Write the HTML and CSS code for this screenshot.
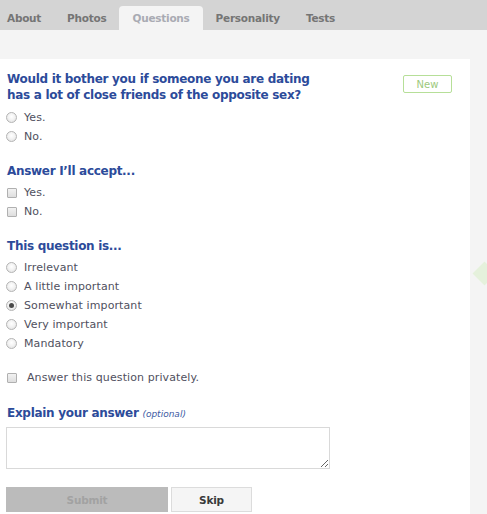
FILE: index.html
```html
<!DOCTYPE html>
<html>
<head>
<meta charset="utf-8">
<link rel="stylesheet" href="styles.css">
</head>
<body>
<nav class="tabs">
  <span class="tab first">About</span>
  <span class="tab">Photos</span>
  <span class="tab active">Questions</span>
  <span class="tab">Personality</span>
  <span class="tab">Tests</span>
</nav>
<div class="page">
  <div class="card">
    <div class="qhead">
      <h2 class="question">Would it bother you if someone you are dating<br>has a lot of close friends of the opposite sex?</h2>
      <span class="badge">New</span>
    </div>
    <div class="row"><span class="radio"></span><span class="label">Yes.</span></div>
    <div class="row"><span class="radio"></span><span class="label">No.</span></div>

    <h3 class="sub">Answer I’ll accept...</h3>
    <div class="row"><span class="check"></span><span class="label">Yes.</span></div>
    <div class="row"><span class="check"></span><span class="label">No.</span></div>

    <h3 class="sub">This question is...</h3>
    <div class="row"><span class="radio"></span><span class="label">Irrelevant</span></div>
    <div class="row"><span class="radio"></span><span class="label">A little important</span></div>
    <div class="row"><span class="radio checked"></span><span class="label">Somewhat important</span></div>
    <div class="row"><span class="radio"></span><span class="label">Very important</span></div>
    <div class="row"><span class="radio"></span><span class="label">Mandatory</span></div>

    <div class="row private"><span class="check"></span><span class="label">Answer this question privately.</span></div>

    <h3 class="sub explain">Explain your answer <em class="opt">(optional)</em></h3>
    <textarea class="answer"></textarea>

    <div class="buttons">
      <button class="btn submit">Submit</button>
      <button class="btn skip">Skip</button>
    </div>
  </div>
  <div class="gutter"><span class="diamond"></span></div>
</div>
</body>
</html>
```
FILE: styles.css
```css
html, body {
  margin: 0;
  padding: 0;
  background: #f4f4f4;
  font-family: "DejaVu Sans", Verdana, sans-serif;
}
.tabs {
  display: flex;
  align-items: flex-end;
  height: 30px;
  background: #d4d4d4;
  box-sizing: border-box;
}
.tab {
  display: flex;
  align-items: center;
  height: 24px;
  padding: 0 13px;
  font-size: 10.5px;
  letter-spacing: -0.25px;
  font-weight: bold;
  color: #757575;
  border-radius: 4px 4px 0 0;
  box-sizing: border-box;
}
.tab.first { padding-left: 7px; }
.tab.active {
  background: #f4f4f4;
  color: #a9abb3;
}
.page {
  display: flex;
  padding-top: 29px;
  min-height: 485px;
  box-sizing: border-box;
}
.card {
  width: 470px;
  flex: none;
  background: #fff;
  padding: 12px 0 2px 7px;
  box-sizing: border-box;
  display: flex;
  flex-direction: column;
}
.gutter {
  flex: 1;
  position: relative;
  overflow: hidden;
}
.diamond {
  position: absolute;
  left: 6px;
  top: 206px;
  width: 17px;
  height: 17px;
  background: #e5f1dc;
  transform: rotate(45deg);
}
.qhead {
  display: flex;
  justify-content: space-between;
  align-items: flex-start;
  margin-bottom: 5px;
}
.question, .sub {
  margin: 0;
  font-size: 12px;
  letter-spacing: -0.3px;
  line-height: 16px;
  font-weight: bold;
  color: #2c4b9a;
}
.badge {
  margin: 4px 18px 0 0;
  width: 49px;
  height: 18px;
  box-sizing: border-box;
  border: 1px solid #b6df98;
  border-radius: 2px;
  display: flex;
  align-items: center;
  justify-content: center;
  font-size: 10px;
  color: #9cc97c;
}
.sub {
  margin-top: 17px;
  margin-bottom: 4px;
}
.row {
  display: flex;
  align-items: center;
  height: 19px;
  margin-left: -1px;
}
.label {
  font-size: 11px;
  letter-spacing: 0.1px;
  color: #50505e;
}
.radio {
  width: 11px;
  height: 11px;
  box-sizing: border-box;
  border: 1px solid #b4b4b4;
  border-radius: 50%;
  background: radial-gradient(circle at 50% 40%, #ffffff 0%, #f3f3f3 45%, #dcdcdc 100%);
  margin-right: 7px;
  display: flex;
  align-items: center;
  justify-content: center;
}
.radio.checked::after {
  content: "";
  width: 5px;
  height: 5px;
  border-radius: 50%;
  background: #4a4a4a;
}
.check {
  width: 10px;
  height: 10px;
  box-sizing: border-box;
  border: 1px solid #b0b0b0;
  border-radius: 1px;
  background: linear-gradient(#f2f2f2, #dedede);
  margin-left: 1px;
  margin-right: 7px;
}
.private {
  margin-top: 15px;
}
.private .check { margin-right: 10px; }
.explain {
  margin-top: 18px;
  margin-bottom: 5px;
}
.opt {
  font-size: 9px;
  letter-spacing: 0;
  font-weight: normal;
  color: #3d5aa3;
}
.answer {
  display: block;
  width: 324px;
  height: 42px;
  margin: 0 0 0 -1px;
  box-sizing: border-box;
  border: 1px solid #d9d9d9;
  resize: both;
  font-family: inherit;
}
.buttons {
  display: flex;
  gap: 3px;
  margin-top: 18px;
  margin-left: -1px;
}
.btn {
  height: 25px;
  font-family: inherit;
  font-size: 10.5px;
  letter-spacing: -0.2px;
  font-weight: bold;
  box-sizing: border-box;
  padding: 0;
}
.submit {
  width: 162px;
  background: #bbbbbb;
  color: #a2a2a2;
  border: 1px solid #bbbbbb;
}
.skip {
  width: 81px;
  background: #f5f5f5;
  color: #3a3a3a;
  border: 1px solid #dcdcdc;
}
```
